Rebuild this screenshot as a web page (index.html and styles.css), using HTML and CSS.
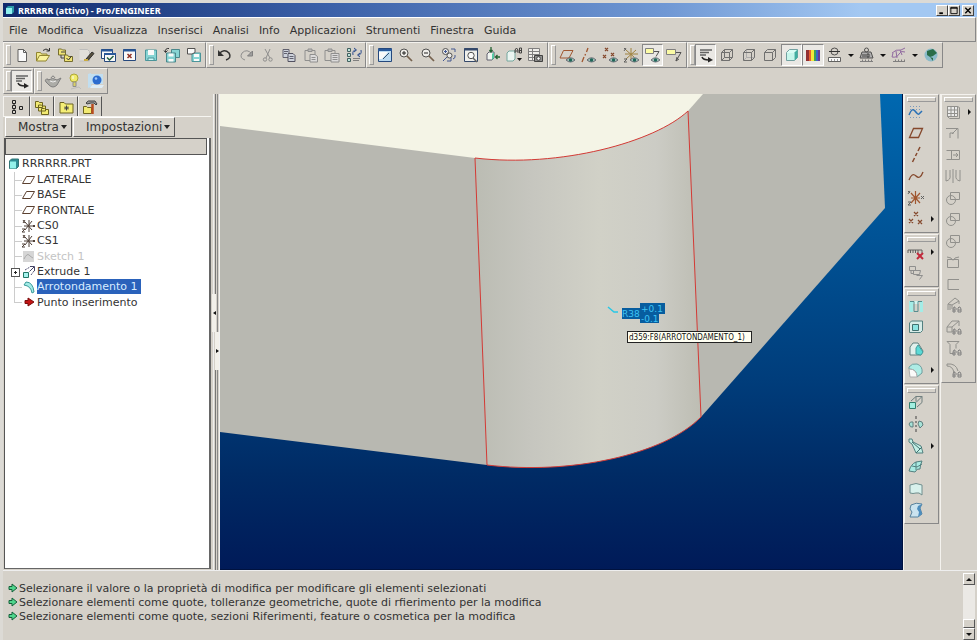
FILE: index.html
```html
<!DOCTYPE html>
<html lang="it">
<head>
<meta charset="utf-8">
<title>RRRRRR (attivo) - Pro/ENGINEER</title>
<link rel="stylesheet" href="styles.css">
</head>
<body>
<svg class="defs" aria-hidden="true">
  <symbol id="eye" viewBox="0 0 9 6"><path d="M0 3Q4.500-1.500 9 3Q4.500 7 0 3Z" fill="#9fc4b8" stroke="#445" stroke-width=".8"/><circle cx="4.500" cy="3" r="1.700" fill="#0d5a4c"/></symbol>
  <symbol id="find" viewBox="0 0 10 7"><path d="M1 6V3l1-2h1v5zM4 3h1M6 6V2l1-1h1l1 2v3zM1 4h2M6 4h3" fill="none" stroke="#777"/></symbol>
</svg>

<header class="titlebar">
  <svg class="app-icon" viewBox="0 0 10 10"><path d="M1 3l2-2h6v6L7 9H1z" fill="#2c9aa8"/><path d="M1 3h6v6H1z" fill="#8ff0ee"/></svg>
  <h1>RRRRRR (attivo) - Pro/ENGINEER</h1>
  <div class="window-controls">
    <button type="button" aria-label="Riduci"><svg viewBox="0 0 10 10"><path d="M2 8h4" stroke="#000" stroke-width="2"/></svg></button>
    <button type="button" aria-label="Ingrandisci"><svg viewBox="0 0 10 10"><path d="M1.500 1.500h7v7h-7zM1 2.500h8" fill="none" stroke="#000"/></svg></button>
    <button type="button" class="close" aria-label="Chiudi"><svg viewBox="0 0 10 10"><path d="M2 2l6 6M8 2l-6 6" stroke="#000" stroke-width="1.500"/></svg></button>
  </div>
</header>

<nav class="menubar">
  <button type="button">File</button><button type="button">Modifica</button><button type="button">Visualizza</button><button type="button">Inserisci</button><button type="button">Analisi</button><button type="button">Info</button><button type="button">Applicazioni</button><button type="button">Strumenti</button><button type="button">Finestra</button><button type="button">Guida</button>
</nav>

<div class="toolbar">
  <div class="group">
    <button type="button" aria-label="Nuovo"><svg viewBox="0 0 18 18"><path d="M5 3.500h5.500l3 3v9H5z" fill="#fff" stroke="#555"/><path d="M10.500 3.500v3h3" stroke="#555"/></svg></button>
    <button type="button" aria-label="Apri"><svg viewBox="0 0 18 18"><path d="M2.500 15V6.500h4l1 1.500H13v2" fill="#f5ee87" stroke="#8a7d20"/><path d="M2.500 15l3-5.500h10L12 15z" fill="#fff799" stroke="#8a7d20"/><path d="M9 4.500q3-3 6 0M15.500 2v3h-3" stroke="#222"/></svg></button>
    <button type="button" aria-label="Directory di lavoro"><svg viewBox="0 0 18 18"><path d="M2.500 3h3l1 1h3v5h-7z" fill="#f2e66e" stroke="#6d6420"/><path d="M5 9v3h3M5 6h4" stroke="#333"/><path d="M8.500 9h3l1 1.500h4v5h-8z" fill="#f2e66e" stroke="#6d6420"/><path d="M10.500 12l2 2 3-4" stroke="#222"/></svg></button>
    <button type="button" aria-label="Cancella"><svg viewBox="0 0 18 18"><path d="M2.500 3.500h8l2 2V15h-10" fill="#e4e2de" stroke="#bbb"/><path d="M9 13l6-7 2 1.500-6 7z" fill="#4c4530" stroke="#222"/><path d="M7 14h4" stroke="#caa936" stroke-width="2"/></svg></button>
    <button type="button" aria-label="Attiva finestra"><svg viewBox="0 0 18 18"><path d="M2.500 3.500h11v9h-11z" fill="#fff" stroke="#123a75"/><path d="M2 4.500h12" stroke="#184d95" stroke-width="2"/><path d="M5.500 7.500h11v8h-11z" fill="#fff" stroke="#123a75"/><path d="M5 8h12" stroke="#184d95" stroke-width="2"/><path d="M8 11.500l2.500 2.500 4-4" stroke="#153" stroke-width="1.500"/></svg></button>
    <button type="button" aria-label="Chiudi finestra"><svg viewBox="0 0 18 18"><path d="M3.500 3.500h12v11h-12z" fill="#fff" stroke="#123a75"/><path d="M3 4.500h13" stroke="#184d95" stroke-width="2"/><path d="M7.500 8l4 4M11.500 8l-4 4" stroke="#8a2013" stroke-width="1.500"/></svg></button>
    <button type="button" aria-label="Salva"><svg viewBox="0 0 18 18"><path d="M3.500 4h11v10.500h-11z" fill="#7fd6d6" stroke="#3d8f95"/><path d="M6 4h6v5H6z" fill="#fff"/><path d="M6 12h6v2.500H6z" fill="#cff" stroke="#3d8f95"/></svg></button>
    <button type="button" aria-label="Salva copia"><svg viewBox="0 0 18 18"><path d="M8.500 3.500h8v8h-8z" fill="#7fd6d6" stroke="#3d7f85"/><path d="M3.500 7h9v9h-9z" fill="#7fd6d6" stroke="#3d7f85"/><path d="M5.500 7.500h5v3h-5zM5.500 13h5v2.500h-5z" fill="#fff"/><path d="M6 2.500Q2 2 2.500 6M1 4.500l1.500 2 2-2" stroke="#222"/></svg></button>
    <button type="button" aria-label="Backup"><svg viewBox="0 0 18 18"><path d="M7 7h8.500v8.500H7z" fill="#7fd6d6" stroke="#3d8f95"/><path d="M9 8h5v3H9zM9 13h5v2H9z" fill="#fff"/><path d="M2.500 2.500H10v4L7 8H2.500z" fill="#fff" stroke="#444"/></svg></button>
  </div>
  <div class="group">
    <button type="button" aria-label="Annulla"><svg viewBox="0 0 18 18"><path d="M3 8q5-6 10-1 3 5-3 7" stroke="#222" stroke-width="1.500"/><path d="M2 4v6h6z" fill="#222"/></svg></button>
    <button type="button" aria-label="Ripeti"><svg viewBox="0 0 18 18"><path d="M15 8q-5-6-10-1-3 5 3 7" stroke="#888"/><path d="M15.500 5v5h-5z" fill="#999" stroke="#777"/></svg></button>
    <button type="button" aria-label="Taglia"><svg viewBox="0 0 18 18"><path d="M6 3l5 9M11 3l-4 9" stroke="#888"/><circle cx="6" cy="13.500" r="1.700" stroke="#888"/><circle cx="11.500" cy="13.500" r="1.700" stroke="#888"/></svg></button>
    <button type="button" aria-label="Copia"><svg viewBox="0 0 18 18"><path d="M3 3.500h6v8H3z" fill="#cdd3de" stroke="#556"/><path d="M8 7.500h5l2 2V15.500H8z" fill="#cdd3de" stroke="#445"/><path d="M4 5.500h4M4 7.500h3M9.500 10.500h4M9.500 12.500h4" stroke="#556"/></svg></button>
    <button type="button" aria-label="Incolla"><svg viewBox="0 0 18 18"><path d="M3 4.500h10v10H3z" stroke="#888"/><path d="M6 3h4v2.500H6z" fill="#bbb" stroke="#888"/><path d="M8 8.500h5l2.500 2v5.500H8z" fill="#ddd" stroke="#888"/><path d="M9.500 11.500h4M9.500 13.500h4" stroke="#888"/></svg></button>
    <button type="button" aria-label="Incolla speciale"><svg viewBox="0 0 18 18"><path d="M2 4.500h10v10H2z" stroke="#888"/><path d="M5 3h4v2.500H5z" fill="#bbb" stroke="#888"/><path d="M8 7.500h8v8.500H8z" fill="#ddd" stroke="#888"/><path d="M9.500 9.500h5M9.500 11.500h5M9.500 13.500h5" stroke="#888"/></svg></button>
    <button type="button" aria-label="Rigenera"><svg viewBox="0 0 18 18"><path d="M2.500 2.500h3v3h-3zM2.500 7.500h3v3h-3zM2.500 12.500h3v3h-3z" fill="#bde6de" stroke="#355"/><path d="M8 9q-1-5 3-5M9 2l2.500 2L9 6M16 4q1 5-3 5M15 11l-2.500-2L15 7" stroke="#1b3f88"/><path d="M8 12.500h7M8 14.500h6" stroke="#777"/></svg></button>
  </div>
  <div class="group">
    <button type="button" aria-label="Ridisegna"><svg viewBox="0 0 18 18"><path d="M2.500 2.500h13v13h-13z" fill="#b9dbf5" stroke="#123a75"/><path d="M3 6h9l-6 7H3z" fill="#fff"/><path d="M2 4h14" stroke="#184d95" stroke-width="2"/><path d="M7 13l6-6" stroke="#246" /></svg></button>
    <button type="button" aria-label="Zoom avanti"><svg viewBox="0 0 18 18"><circle cx="7" cy="7" r="4" fill="#f2f2ee" stroke="#444"/><path d="M5 7h4M7 5v4" stroke="#111"/><path d="M10 10l5 5" stroke="#6b5540" stroke-width="1.700"/></svg></button>
    <button type="button" aria-label="Zoom indietro"><svg viewBox="0 0 18 18"><circle cx="7" cy="7" r="4" fill="#f2f2ee" stroke="#444"/><path d="M5 7h4" stroke="#111"/><path d="M10 10l5 5" stroke="#6b5540" stroke-width="1.700"/></svg></button>
    <button type="button" aria-label="Riadatta"><svg viewBox="0 0 18 18"><circle cx="5.500" cy="5.500" r="3" fill="#eee" stroke="#444"/><circle cx="9.500" cy="9.500" r="2.500" fill="#eee" stroke="#444"/><path d="M5.500 4v3M4 5.500h3M7 11l-4 4M11 3h4v3M15 9q1 3-2 4M7 15h4v-3" stroke="#334a8a"/></svg></button>
    <button type="button" aria-label="Zoom finestra"><svg viewBox="0 0 18 18"><path d="M2.500 2.500h13v13h-13z" fill="#f4f4f0" stroke="#233a60"/><path d="M2 3.500h14" stroke="#233a60" stroke-width="2"/><circle cx="9" cy="9.500" r="3.200" fill="#fff" stroke="#444"/><path d="M11 12l4 4" stroke="#555" stroke-width="1.500"/></svg></button>
    <button type="button" aria-label="Riorienta"><svg viewBox="0 0 18 18"><path d="M4 8l2-2h5v6l-2 2H4z" fill="#f6fbf6" stroke="#556"/><path d="M9 8v6l2-2V6z" fill="#4ac9a0"/><path d="M8 1v5M6.500 4l1.500 2 1.500-2M17 11h-4M14.500 9l-2 2 2 2" stroke="#152" stroke-width="1.300"/></svg></button>
    <button type="button" aria-label="Viste salvate"><svg viewBox="0 0 18 18"><path d="M2 7l2-2h6v8l-2 2H2z" fill="#eefaf6" stroke="#6aa39a"/><path d="M10 7V4l1.500-2L13 4v3M10 5h3M14.500 2v5h2V2zM14.500 4.500h2" stroke="#333"/><path d="M12 12h5l-2.500 3z" fill="#000"/></svg></button>
    <button type="button" aria-label="Gestione viste"><svg viewBox="0 0 18 18"><path d="M2.500 2.500h11v12h-11zM2.500 5.500h11M2.500 8.500h11M2.500 11.500h11M6.500 2.500v12" fill="#f2f2ee" stroke="#777"/><path d="M8.500 9.500h8v6h-8z" fill="#888" stroke="#333"/><circle cx="12.500" cy="12.500" r="1.800" fill="#fff" stroke="#333"/></svg></button>
  </div>
  <div class="group">
    <button type="button" aria-label="Mostra piani"><svg viewBox="0 0 18 18"><path d="M5.500 4.500H15L11 12H2z" stroke="#9b4a20"/><use href="#eye" x="8" y="11" width="9" height="6"/></svg></button>
    <button type="button" aria-label="Mostra assi"><svg viewBox="0 0 18 18"><path d="M9 2L7.500 6M6.500 8l-.5 1.500M5 11l-2 5" stroke="#9b4a20" stroke-width="1.300"/><use href="#eye" x="8" y="11" width="9" height="6"/></svg></button>
    <button type="button" aria-label="Mostra punti"><svg viewBox="0 0 18 18"><path d="M4 2l3 3M7 2L4 5M10 7l3 3M13 7l-3 3M2 9l3 3M5 9l-3 3" stroke="#7d3a1c" stroke-width="1.200"/><use href="#eye" x="8" y="11" width="9" height="6"/></svg></button>
    <button type="button" aria-label="Mostra sistemi di coordinate"><svg viewBox="0 0 18 18"><path d="M9 2v12M3 8h13M4 13L14 4M4 4l8 7" stroke="#9b7a30"/><path d="M2 2l2 2M4 2L2 5M2 13h3l-3 3h3" stroke="#555"/><use href="#eye" x="8" y="11" width="9" height="6"/></svg></button>
    <button type="button" class="pressed" aria-pressed="true" aria-label="Mostra annotazioni"><svg viewBox="0 0 18 18"><path d="M1.500 2.500h8v5h-8z" fill="#ffffa0" stroke="#777"/><path d="M10 5.500h5l-3 5" stroke="#444"/><use href="#eye" x="7" y="11" width="9" height="6"/></svg></button>
    <button type="button" aria-label="Annotazioni"><svg viewBox="0 0 18 18"><path d="M1.500 3.500h9v5h-9z" fill="#ffffa0" stroke="#777"/><path d="M11 6.500h5L11 15M12 11l-1 4 3-2" stroke="#444"/></svg></button>
  </div>
  <div class="group">
    <button type="button" class="pressed" aria-pressed="true" aria-label="Orientamento"><svg viewBox="0 0 18 18"><path d="M3 4h12M3 6.500h9M3 9h6" stroke="#555" stroke-width="1.500"/><path d="M5 11q1 3 7 3" stroke="#111" stroke-width="1.500"/><path d="M11 11l5 3-5 2.500z" fill="#111"/></svg></button>
    <button type="button" aria-label="Wireframe"><svg viewBox="0 0 18 18"><path d="M3.500 6.500h8v8h-8zM6.500 3.500h8v8h-8zM3.500 6.500l3-3M11.500 6.500l3-3M11.500 14.500l3-3M3.500 14.500l3-3" stroke="#666"/></svg></button>
    <button type="button" aria-label="Linee nascoste"><svg viewBox="0 0 18 18"><path d="M6.500 4v7.500h8M3.500 14.500l3-3" stroke="#aaa"/><path d="M3.500 6.500h8v8h-8zM6.500 3.500h8v8M3.500 6.500l3-3M11.500 6.500l3-3M11.500 14.500l3-3" stroke="#666"/></svg></button>
    <button type="button" aria-label="Nessuna linea nascosta"><svg viewBox="0 0 18 18"><path d="M3.500 6.500h8v8h-8zM6.500 3.500h8v8M3.500 6.500l3-3M11.500 6.500l3-3M11.500 14.500l3-3" stroke="#666"/></svg></button>
    <button type="button" class="pressed" aria-pressed="true" aria-label="Ombreggiatura"><svg viewBox="0 0 18 18"><path d="M3.500 6.500l3-3h8v8l-3 3h-8z" fill="#d9fff6" stroke="#699"/><path d="M11.500 6.500l3-3v8l-3 3z" fill="#2fa899"/><path d="M4 7h7v7H4z" fill="#c4f8ec"/></svg></button>
    <button type="button" class="pressed" aria-pressed="true" aria-label="Colori"><svg viewBox="0 0 18 18"><path d="M2 4h3v11H2z" fill="#8a1d20"/><path d="M5 4h2v11H5z" fill="#e8531f"/><path d="M7 4h3v11H7z" fill="#f4e82a"/><path d="M10 4h2v11h-2z" fill="#2e9b46"/><path d="M12 4h2v11h-2z" fill="#2a57c8"/><path d="M14 4h2v11h-2z" fill="#5a2a8c"/></svg></button>
    <button type="button" aria-label="Misura diametro"><svg viewBox="0 0 18 18"><circle cx="8.500" cy="5.500" r="3.500" stroke="#444"/><path d="M3 5.500h11" stroke="#222"/><path d="M2.500 11.500h12v4h-12z" fill="#fff" stroke="#555"/><path d="M5.500 13v2M8.500 13v2M11.500 13v2" stroke="#999"/></svg></button>
    <button type="button" class="more" aria-label="Altre misure"></button>
    <button type="button" aria-label="Massa"><svg viewBox="0 0 18 18"><path d="M4 6h9l2 6H2z" fill="#aaa" stroke="#444"/><circle cx="8.500" cy="4" r="2" stroke="#444"/><path d="M5 8v3M7 8v3M9 8h2v3H9z" stroke="#333"/><path d="M2 15.500h13M4.500 13.500v2M7.500 13.500v2M10.500 13.500v2M13.500 13.500v2" stroke="#777"/></svg></button>
    <button type="button" class="more" aria-label="Altre analisi"></button>
    <button type="button" aria-label="Curvatura"><svg viewBox="0 0 18 18"><path d="M2 7q4-4 9-3l4-2M2 11q5 1 7-3t6-2M3 7l-1 4M6 5l1 7M10 4l2 5" stroke="#8a609c"/><path d="M3 15.500h12M5.500 13.500v2M8.500 13.500v2M11.500 13.500v2M14.500 13.500v2" stroke="#777"/></svg></button>
    <button type="button" class="more" aria-label="Altre curvature"></button>
    <button type="button" aria-label="Risorse web"><svg viewBox="0 0 18 18"><circle cx="9" cy="9" r="6.500" fill="#83b9ca"/><path d="M5 5l6-2 4 4-4 3-3 1-3-2z" fill="#17633b"/><path d="M8 11l3 1v3z" fill="#17633b"/></svg></button>
  </div>
</div>

<div class="toolbar">
  <div class="group">
    <button type="button" class="pressed" aria-pressed="true" aria-label="Albero modello"><svg viewBox="0 0 18 18"><path d="M3 4h12M3 6.500h9M3 9h6" stroke="#555" stroke-width="1.500"/><path d="M5 11q1 3 7 3" stroke="#111" stroke-width="1.500"/><path d="M11 11l5 3-5 2.500z" fill="#111"/></svg></button>
  </div>
  <div class="group">
    <button type="button" aria-label="Rendering"><svg viewBox="0 0 18 18"><path d="M4 8q5-3 9 0l4-2-4 7q-4 4-8 0L2 10q-2-3 2-3z" fill="#a8a8a4" stroke="#777"/><path d="M7 6q2-4 4 0" stroke="#777"/><path d="M6 9q3 2 6 0" stroke="#eee"/></svg></button>
    <button type="button" aria-label="Luci"><svg viewBox="0 0 18 18"><path d="M6 17l8-2 2 2" stroke="#bbb"/><circle cx="9" cy="6" r="4" fill="#f3ee62" stroke="#a9a22b"/><path d="M8 10h3v4.500H8z" fill="#ddd35a" stroke="#888"/><path d="M8 4v3" stroke="#fff"/></svg></button>
    <button type="button" aria-label="Scena"><svg viewBox="0 0 18 18"><path d="M1 2l3-1v14l-3 1zM4 2h12v10H4z" fill="#bfe0f5"/><path d="M3 16h12l2-3H5z" fill="#dfeffa"/><circle cx="10" cy="8" r="4.500" fill="#1a62cf"/><circle cx="9" cy="6.500" r="1.300" fill="#9cc7ff"/></svg></button>
  </div>
</div>

<main class="workspace">
  <aside class="navigator">
    <div class="tabs" role="tablist">
      <button type="button" class="selected" role="tab" aria-selected="true" aria-label="Albero modello"><svg viewBox="0 0 18 18"><path d="M4.500 2.500h3v3h-3zM4.500 7.500h3v3h-3zM4.500 12.500h3v3h-3zM11.500 8.500h3v3h-3zM6 5v3M6 10v3" stroke="#222"/></svg></button>
      <button type="button" role="tab" aria-label="Browser cartelle"><svg viewBox="0 0 18 18"><path d="M2.500 3.500h3l1 1h3v5h-7zM5.500 7h3l1 1h3v5h-7zM8.500 10.500h3l1 1h3v5h-7z" fill="#f2ea72" stroke="#6d6420"/></svg></button>
      <button type="button" role="tab" aria-label="Preferiti"><svg viewBox="0 0 18 18"><path d="M3 15V4.500h4l1.500 1.500H16v9z" fill="#f5ee76" stroke="#6d6420"/><path d="M9.500 7.500v5M7 10h5M8 8.500l3 3M11 8.500l-3 3" stroke="#444"/></svg></button>
      <button type="button" role="tab" aria-label="Connessioni"><svg viewBox="0 0 18 18"><path d="M2.500 15.500V8.500h3l1 1h4v6z" fill="#f2ea72" stroke="#6d6420"/><path d="M5 5q2-3 5-2h4l2 3-1 1-2-2h-3L6 6z" fill="#999" stroke="#444"/><path d="M11.500 6v10" stroke="#b84c1f" stroke-width="2.500"/></svg></button>
    </div>
    <div class="tree-menu">
      <button type="button">Mostra</button><button type="button">Impostazioni</button>
    </div>
    <div class="tree-panel">
      <div class="tree-head"></div>
      <div class="tree-root"><svg viewBox="0 0 12 12"><path d="M1.500 3l2-2h7v7.500l-2 2h-7z" fill="#2d8d94" stroke="#377"/><path d="M2 3.500h6v7H2z" fill="#93f2ea"/></svg>RRRRRR.PRT</div>
      <ul class="tree">
        <li><svg viewBox="0 0 14 14"><path d="M4.500 3.500h8l-4 7h-8z" stroke="#5b4030"/></svg><span>LATERALE</span></li>
        <li><svg viewBox="0 0 14 14"><path d="M4.500 3.500h8l-4 7h-8z" stroke="#5b4030"/></svg><span>BASE</span></li>
        <li><svg viewBox="0 0 14 14"><path d="M4.500 3.500h8l-4 7h-8z" stroke="#5b4030"/></svg><span>FRONTALE</span></li>
        <li><svg viewBox="0 0 14 14"><path d="M7 1v12M2 7h9M3 11l7-9M3 3l7 8M1 1l2 3M3 1L1 4M11 6l2 2M13 6l-2 2M0 10h3l-3 3h3" stroke="#4f4038"/></svg><span>CS0</span></li>
        <li><svg viewBox="0 0 14 14"><path d="M7 1v12M2 7h9M3 11l7-9M3 3l7 8M1 1l2 3M3 1L1 4M11 6l2 2M13 6l-2 2M0 10h3l-3 3h3" stroke="#4f4038"/></svg><span>CS1</span></li>
        <li class="hidden-item"><svg viewBox="0 0 14 14"><path d="M1 2h11v11H1z" fill="#d6d6d6"/><path d="M2 10q3-6 5-4t4 3" stroke="#aaa"/></svg><span>Sketch 1</span></li>
        <li class="branch"><svg viewBox="0 0 14 14"><path d="M1.500 7.500h5v5h-5z" fill="#a6f3ee" stroke="#276"/><path d="M3 5l5-3M9 10l3-4" stroke="#557" stroke-dasharray="2 1"/><path d="M8 1.500h4.500V6M12 2L7.500 6.500" stroke="#446"/></svg><span>Extrude 1</span></li>
        <li class="active"><svg viewBox="0 0 14 14"><path d="M2 5l2-3q7 0 8 10l-2 1Q9 6 2 5z" fill="#a3ece6" stroke="#3b9a9a"/></svg><span>Arrotondamento 1</span></li>
        <li><svg viewBox="0 0 14 14"><path d="M3 5.500h3V3l6 4-6 4V8.500H3z" fill="#c21414" stroke="#7a0c0c"/></svg><span>Punto inserimento</span></li>
      </ul>
    </div>
  </aside>

  <div class="splitter">
    <button type="button" class="collapse" aria-label="Comprimi"></button>
    <button type="button" class="expand" aria-label="Espandi"></button>
  </div>

  <svg class="viewport" viewBox="220 94 683 476" preserveAspectRatio="xMinYMin slice" role="img" aria-label="Modello RRRRRR">
    <defs>
      <linearGradient id="sky" x1="0" y1="0" x2="0" y2="1">
        <stop offset="0" stop-color="#0068b0"/><stop offset=".6" stop-color="#003d7b"/><stop offset=".8" stop-color="#002b65"/><stop offset="1" stop-color="#001a58"/>
      </linearGradient>
      <linearGradient id="round" x1="0" y1="0" x2="1" y2="0">
        <stop offset="0" stop-color="#bbbcb3"/><stop offset=".25" stop-color="#c6c6bf"/><stop offset=".55" stop-color="#d1d1c7"/><stop offset=".8" stop-color="#ccccc5"/><stop offset="1" stop-color="#bdbdb3"/>
      </linearGradient>
    </defs>
    <rect x="220" y="94" width="683" height="476" fill="url(#sky)"/>
    <path d="M220 94H880L885 208L701 417Q640 460 487 465L220 432Z" fill="#b8b8b1"/>
    <path d="M475 158C560 168 655 142 688 111L701 417C664 455 570 475 487 465Z" fill="url(#round)"/>
    <path d="M220 94H703L688 111C655 142 560 168 475 158L220 126Z" fill="#f4f4e6"/>
    <path d="M475 158C560 168 655 142 688 111L701 417C664 455 570 475 487 465Z" fill="none" stroke="#d33a35"/>
    <path d="M902.500 94V569.500H220" fill="none" stroke="#00123f"/>
    <path d="M608 307l6 5h4" fill="none" stroke="#28c8e6" stroke-width="1.500"/>
    <path d="M622 308h18v-5h25v11h-6v9h-19v-4h-18z" fill="#075d9f"/>
    <g class="dimension"><text x="622" y="317">R38</text><text x="641" y="312">+0.1</text><text x="641" y="322">-0.1</text></g>
    <rect x="627.500" y="331.500" width="124" height="11" fill="#fffff2" stroke="#222"/>
    <text class="hint" x="629" y="340">d359:F8(ARROTONDAMENTO_1)</text>
  </svg>

  <div class="tool-column">
    <div class="group">
      <button type="button" aria-label="Sketch"><svg viewBox="0 0 18 18"><path d="M3 3.500h12M3 14.500h12M3 6.500h12" stroke="#6f93bb" stroke-dasharray="1 2"/><path d="M2 12q3-8 6-4t4 3 3-3" stroke="#1767b5" stroke-width="1.500"/></svg></button>
      <button type="button" aria-label="Piano"><svg viewBox="0 0 18 18"><path d="M6.500 4.500h9l-4 9h-9z" stroke="#7d3a1c" stroke-width="1.300"/></svg></button>
      <button type="button" aria-label="Asse"><svg viewBox="0 0 18 18"><path d="M13 1l-2 4M10 7L8.500 10M7.500 12l-2 4" stroke="#7d3a1c" stroke-width="1.500"/></svg></button>
      <button type="button" aria-label="Curva"><svg viewBox="0 0 18 18"><path d="M2 13q3-8 7-4t7-4" stroke="#7d3a1c" stroke-width="1.300"/></svg></button>
      <button type="button" aria-label="Sistema di coordinate"><svg viewBox="0 0 18 18"><path d="M8.500 2v13M4 9h9M4 14L13 4M4 4l9 10" stroke="#9b4a20" stroke-width="1.200"/><path d="M1 2l2 2M3 2L1 5M14 7l3 3M17 7l-3 3M1 13h3l-3 3h3" stroke="#555"/></svg></button>
      <button type="button" class="has-more" aria-label="Punto"><svg viewBox="0 0 18 18"><path d="M7 2l4 4M11 2L7 6M2 9l4 4M6 9l-4 4M11 10l4 4M15 10l-4 4" stroke="#7d3a1c" stroke-width="1.200"/></svg></button>
    </div>
    <div class="group">
      <button type="button" class="has-more" aria-label="Annotazione"><svg viewBox="0 0 18 18"><path d="M1 10V7h14v3M3.500 7v3M6 7v3M8.500 7v3M11 7v3" stroke="#555"/><path d="M10 10l6 6M16 10l-6 6" stroke="#c0182d" stroke-width="2"/></svg></button>
      <button type="button" aria-label="Feature annotazione"><svg viewBox="0 0 18 18"><path d="M2.500 2.500h6v4h-6zM6.500 6.500h7l-1 4h-6zM9.500 11.500h6l-3 4M4 6.500v3h2" stroke="#888"/></svg></button>
    </div>
    <div class="group">
      <button type="button" aria-label="Foro"><svg viewBox="0 0 18 18"><path d="M2 4h14v11h-3V4H6v11H2z" fill="#9ff0ea"/><path d="M6 4h6v3H6z" fill="#d4f7f3"/><path d="M3 4.500h4v10h4v-10h4" stroke="#4a8588"/></svg></button>
      <button type="button" aria-label="Guscio"><svg viewBox="0 0 18 18"><path d="M2.500 5l2-2h11v9.500l-2 2h-11z" fill="#d9efec" stroke="#477"/><path d="M5.500 6.500h6v6h-6z" fill="#85e8e6" stroke="#366"/></svg></button>
      <button type="button" aria-label="Costola"><svg viewBox="0 0 18 18"><path d="M3 7l3-4h5l5 8-2 4H3z" fill="#e3f4f0" stroke="#577"/><path d="M9 14V8l2-3 5 7-2 3z" fill="#4fdbd8" stroke="#399"/></svg></button>
      <button type="button" class="has-more" aria-label="Arrotondamento"><svg viewBox="0 0 18 18"><path d="M2 6q3-4 8-3 6 2 5 9l-5 4q0-8-8-8z" fill="#a9efe9" stroke="#699"/><path d="M2 8q8 0 8 8H3z" fill="#fff" stroke="#aaa"/></svg></button>
    </div>
    <div class="group">
      <button type="button" aria-label="Estrusione"><svg viewBox="0 0 18 18"><path d="M2.500 8.500h6v6h-6z" fill="#9df3e3" stroke="#276"/><path d="M4 7l5-4.500h6v6L10 13M9 8.500l6-6M9 2.500v5" fill="none" stroke="#677"/></svg></button>
      <button type="button" aria-label="Rivoluzione"><svg viewBox="0 0 18 18"><path d="M9 1v3M9 6v2M9 10v2M9 14v3" stroke="#333"/><path d="M2 9q1-3 4-2v5q-3 1-4-3zM12 6q4 0 4 4l-3 3-2-4z" fill="#a2e4d9" stroke="#577"/></svg></button>
      <button type="button" class="has-more" aria-label="Sweep"><svg viewBox="0 0 18 18"><path d="M2 2h3l1 3 8 4 2 7H9L5 7 2 5z" fill="#c2f3e9" stroke="#477"/><path d="M5 5l8 7M9 16l4-4 2-2" stroke="#366"/></svg></button>
      <button type="button" aria-label="Blend"><svg viewBox="0 0 18 18"><path d="M2 13q2-7 7-9l6-1q-2 4-2 8-3-1-5 3z" fill="#a5eee6" stroke="#477"/><path d="M5 8l5 1 5-3M9 4v8" stroke="#477"/></svg></button>
      <button type="button" aria-label="Riempi"><svg viewBox="0 0 18 18"><path d="M3 5q6-3 12 0v10q-3-3-6-2t-6 0z" fill="#d9f5f0" stroke="#688"/></svg></button>
      <button type="button" aria-label="Stile"><svg viewBox="0 0 18 18"><path d="M4 4q5-3 11-1l-2 4 2 6-4 3H3l2-5-2-3z" fill="#c9e6f4" stroke="#4b7a99"/><path d="M11 5l4-2-2 4 2 6-4 3 1-5-2-3z" fill="#3e86bd"/></svg></button>
    </div>
  </div>

  <div class="tool-column edit-tools">
    <div class="group">
      <button type="button" class="has-more" aria-label="Ripetizione"><svg viewBox="0 0 18 18"><path d="M3.500 3.500h10v10h-10z" fill="#eee"/><path d="M3.500 3.500h10l2 1v11h-10l-2-2zM7 3.500v10M10.500 3.500v10M3.500 7h10M3.500 10.500h10"/></svg></button>
      <button type="button" aria-label="Taglia superficie"><svg viewBox="0 0 18 18"><path d="M2 4.500h12v10M6 14V9h4M8 10l6-6"/></svg></button>
      <button type="button" aria-label="Estendi"><svg viewBox="0 0 18 18"><path d="M2.500 4.500h13v9h-13M7.500 4v10M9 9h5M12 7l2 2-2 2"/></svg></button>
      <button type="button" aria-label="Specchio"><svg viewBox="0 0 18 18"><path d="M9 2v14M2 3v11q5-1 4-6V3M16 3v11q-5-1-4-6V3"/></svg></button>
      <button type="button" aria-label="Unisci"><svg viewBox="0 0 18 18"><circle cx="7" cy="11" r="4.500"/><path d="M6.500 3.500h9v7h-9z"/></svg></button>
      <button type="button" aria-label="Interseca"><svg viewBox="0 0 18 18"><circle cx="7" cy="11" r="4.500"/><path d="M6.500 3.500h9v7h-9z"/></svg></button>
      <button type="button" aria-label="Sottrai"><svg viewBox="0 0 18 18"><circle cx="7" cy="11" r="4.500"/><path d="M6.500 3.500h9v7h-9z"/></svg></button>
      <button type="button" aria-label="Proietta"><svg viewBox="0 0 18 18"><path d="M3.500 6.500h11v8h-11zM3 4l4 1q2 4 4 0l4-1"/></svg></button>
      <button type="button" aria-label="Offset"><svg viewBox="0 0 18 18"><path d="M15 4.500H4v10h11"/></svg></button>
      <button type="button" aria-label="Cerca solidi"><svg viewBox="0 0 18 18"><path d="M4 14V8l7-6 4 3v3M4 8l4 1v4M8 9l7-4M6 9v5"/><use href="#find" x="8" y="10" width="10" height="7"/></svg></button>
      <button type="button" aria-label="Cerca estrusioni"><svg viewBox="0 0 18 18"><path d="M3 9l5-6h7v5M3 9h5v5H3zM8 9l7-6"/><use href="#find" x="8" y="10" width="10" height="7"/></svg></button>
      <button type="button" aria-label="Cerca fori"><svg viewBox="0 0 18 18"><path d="M3 2.500h12l-3 3v4M3 2.500l3 3v9h3"/><use href="#find" x="8" y="10" width="10" height="7"/></svg></button>
      <button type="button" aria-label="Cerca raccordi"><svg viewBox="0 0 18 18"><path d="M3 3q9-1 11 7M3 5q6 0 7 7M3 3v2"/><use href="#find" x="8" y="10" width="10" height="7"/></svg></button>
    </div>
  </div>
</main>

<footer class="messages">
  <ul>
    <li><svg viewBox="0 0 10 10"><path d="M1 3.500h3V1l5 4-5 4V6.500H1z" fill="#4fd58c" stroke="#14603a"/></svg>Selezionare il valore o la proprietà di modifica per modificare gli elementi selezionati</li>
    <li><svg viewBox="0 0 10 10"><path d="M1 3.500h3V1l5 4-5 4V6.500H1z" fill="#4fd58c" stroke="#14603a"/></svg>Selezionare elementi come quote, tolleranze geometriche, quote di rfierimento per la modifica</li>
    <li><svg viewBox="0 0 10 10"><path d="M1 3.500h3V1l5 4-5 4V6.500H1z" fill="#4fd58c" stroke="#14603a"/></svg>Selezionare elementi come quote, sezioni Riferimenti, feature o cosmetica per la modifica</li>
  </ul>
  <div class="scrollbar">
    <button type="button" class="up" aria-label="Scorri su"></button>
    <div class="track"><div class="thumb"></div></div>
    <button type="button" class="down" aria-label="Scorri giù"></button>
  </div>
</footer>
</body>
</html>
```
FILE: styles.css
```css
* { box-sizing: border-box; }

body {
  margin: 0;
  height: 100vh;
  overflow: hidden;
  display: flex;
  flex-direction: column;
  padding: 3px 0 0 3px;
  background: #d5d1c9;
  box-shadow: inset 3px 3px #dcdad5;
  color: #333;
  font-family: "DejaVu Sans", Verdana, sans-serif;
  font-size: 11px;
}

button {
  margin: 0;
  padding: 0;
  border: 0;
  background: none;
  color: inherit;
  font: inherit;
}

ul { margin: 0; padding: 0; list-style: none; }
svg { display: block; flex: none; fill: none; }
.defs { position: absolute; width: 0; height: 0; }

/* Title bar */
.titlebar {
  display: flex;
  align-items: center;
  height: 14px;
  flex: none;
  padding: 0 3px 0 2px;
  background: linear-gradient(90deg, #102a6c, #3b60a8 33%, #7098d4 68%, #a3c8f2 88%);
}
.app-icon { width: 10px; height: 10px; }
.titlebar h1 {
  flex: 1;
  margin: 0 0 0 3px;
  color: #fff;
  font: bold 9px "Noto Sans", sans-serif;
}
.window-controls { display: flex; }
.window-controls button {
  width: 12px;
  height: 11px;
  background: #d6d2ca;
  border: 1px solid;
  border-color: #fff #444 #444 #fff;
}
.window-controls svg { width: 10px; height: 9px; }
.window-controls .close { margin-left: 2px; }

/* Menu */
.menubar {
  display: flex;
  flex: none;
  height: 25px;
  margin-right: 1px;
  padding: 1px 0 0 1px;
  border-top: 1px solid #fff;
  border-right: 1px solid #888;
  border-bottom: 1px solid #888;
}
.menubar button { padding: 0 5px; }

/* Tool bars */
.toolbar { display: flex; flex: none; height: 26px; }
.group {
  position: relative;
  display: flex;
  border: 1px solid;
  border-color: #f4f2ee #888 #888 #f4f2ee;
}
.toolbar .group { padding: 0 1px 0 7px; align-items: center; }
.group::before {
  content: "";
  position: absolute;
  border: 1px solid;
  border-color: #fff #999 #999 #fff;
}
.toolbar .group::before { left: 2px; top: 2px; bottom: 2px; width: 3px; }
.group button {
  display: flex;
  align-items: center;
  justify-content: center;
  width: 21px;
  height: 22px;
}
.toolbar button:nth-child(even) { width: 22px; }
.group svg, .tabs svg { width: 18px; height: 18px; }
.group svg { opacity: .9; }
.group .pressed {
  background: #eae8e4;
  border: 1px solid;
  border-color: #888 #fff #fff #888;
}
.toolbar .group .more { width: 11px; }
.more::before, .has-more::after { content: ""; border: 3px solid transparent; }
.more::before { border-top-color: #111; border-bottom: 0; }

/* Work area */
.workspace { display: flex; flex: 1; min-height: 0; }
.navigator {
  display: flex;
  flex-direction: column;
  width: 208px;
  flex: none;
  padding-bottom: 1px;
}
.tabs { display: flex; height: 23px; padding-top: 2px; border-bottom: 1px solid #f6f5f1; }
.tabs button {
  display: flex;
  align-items: center;
  justify-content: center;
  width: 24px;
  border-left: 1px solid #f4f2ee;
  border-right: 1px solid #555;
  border-top: 1px solid #eee;
}
.tabs .selected { width: 27px; }
.tree-menu { display: flex; flex: none; height: 21px; padding-left: 2px; gap: 1px; }
.tree-menu button {
  display: flex;
  align-items: center;
  gap: 2px;
  height: 20px;
  padding: 0 4px 0 12px;
  border: 1px solid;
  border-color: #fff #555 #555 #fff;
  font-size: 12px;
}
.tree-menu button::after { content: ""; border: 3px solid transparent; border-top: 4px solid #222; border-bottom: 0; }
.tree-panel {
  flex: 1;
  background: #fff;
  border: 1px solid #666;
  border-left-color: #555;
  border-right: 2px solid #666;
  border-top: 0;
  margin-left: 1px;
}
.tree-head { height: 17px; margin-right: 2px; background: #d5d1c9; border: 1px solid #555; }
.tree-root { display: flex; align-items: center; gap: 2px; height: 17px; margin-left: 3px; }
.tree-root svg { width: 12px; height: 12px; }
.tree {
  display: flex;
  flex-direction: column;
  height: 138px;
  margin-left: 9px;
}
.tree li { position: relative; display: flex; flex: 1; align-items: center; padding-left: 8px; gap: 1px; }
.tree svg { width: 14px; height: 14px; }
.tree li::before { content: ""; position: absolute; left: 0; top: 50%; width: 8px; border-top: 1px solid #ccc; }
.tree li::after { content: ""; position: absolute; left: 0; top: 0; bottom: 0; border-left: 1px solid #ccc; }
.tree li:last-child::after { bottom: 50%; }
.tree .hidden-item { color: #c4c4c4; }
.tree .active span { background: #2a62bb; color: #d8ecff; line-height: 15px; padding-right: 3px; }
.tree .branch::before {
  left: -3px;
  top: 4px;
  width: 7px;
  height: 7px;
  border: 1px solid #555;
  background: linear-gradient(#222, #222) center / 3px 1px no-repeat, linear-gradient(#222, #222) center / 1px 3px no-repeat, #fff;
  z-index: 1;
}

.splitter {
  position: relative;
  width: 9px;
  flex: none;
  background: linear-gradient(90deg, #d5d1c9 2px, #eee 2px 3px, #d5d1c9 3px 4px, #777 4px 5px, #d5d1c9 5px 6px, #888 6px 7px, #d5d1c9 7px 8px, #f2f2f2 8px);
}
.splitter button {
  position: absolute;
  display: flex;
  align-items: center;
  justify-content: center;
  width: 4px;
  height: 38px;
  background: #f2f0ea;
}
.splitter button::before { content: ""; border: 2px solid transparent; }
.splitter .collapse { left: 1px; top: 42%; }
.splitter .collapse::before { border-right: 3px solid #111; border-left: 0; }
.splitter .expand { left: 4px; top: 50%; }
.splitter .expand::before { border-left: 3px solid #111; border-right: 0; }

.viewport { flex: 1; min-width: 0; height: 100%; }
.dimension { fill: #3ec3f5; font-size: 9px; }
.hint { fill: #111; font: 8px "DejaVu Sans Condensed", sans-serif; }

.tool-column { width: 37px; flex: none; border-left: 1px solid #f4f2ee; }
.tool-column .group {
  flex-direction: column;
  width: 35px;
  margin-bottom: 1px;
  padding: 6px 0 2px;
}
.tool-column .group::before { left: 2px; right: 2px; top: 2px; height: 3px; }
.tool-column button { height: 21px; }
.tool-column button:nth-child(even) { height: 22px; }
.has-more { position: relative; }
.has-more::after { position: absolute; left: 26px; border-left-color: #111; border-right: 0; }
.edit-tools svg { stroke: #8a8a86; }

/* Messages */
.messages { display: flex; flex: none; height: 70px; border-top: 1px solid #eee; }
.messages ul { flex: 1; padding: 10px 0 0 5px; }
.messages li { display: flex; align-items: center; gap: 1px; height: 14px; }
.messages svg { width: 10px; height: 10px; }
.scrollbar { display: flex; flex-direction: column; width: 12px; margin: 2px 2px 0 0; }
.scrollbar button, .thumb {
  display: flex;
  align-items: center;
  justify-content: center;
  height: 12px;
  background: #d5d1c9;
  border: 1px solid;
  border-color: #fff #555 #555 #fff;
}
.scrollbar button::before { content: ""; border: 3px solid transparent; }
.scrollbar .up::before { border-bottom-color: #111; border-top: 0; }
.scrollbar .down::before { border-top-color: #111; border-bottom: 0; }
.track { display: flex; flex: 1; flex-direction: column; justify-content: flex-end; background: #ebe9e5; }
.thumb { height: 9px; }
```
